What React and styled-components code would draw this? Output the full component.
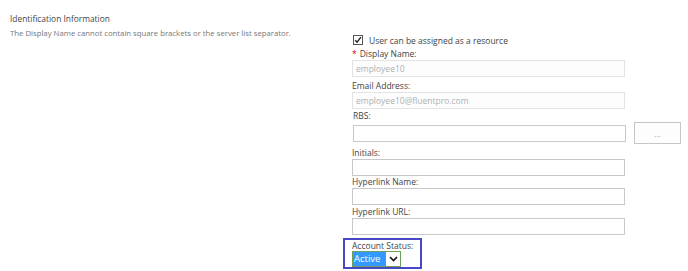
import React from "react";
import styled, { createGlobalStyle } from "styled-components";

const GlobalStyle = createGlobalStyle`
  html, body {
    margin: 0;
    padding: 0;
    background: #fff;
  }
  body {
    font-family: "Open Sans", "Noto Sans", sans-serif;
    color: #444;
  }
`;

const Page = styled.div`
  width: 688px;
  height: 271px;
  overflow: hidden;
  display: grid;
  grid-template-columns: 352px 1fr;
  grid-template-rows: auto 1fr;
`;

const Title = styled.h2`
  grid-column: 1 / -1;
  margin: 0;
  padding: 12px 0 0 10px;
  font-size: 8.4px;
  line-height: 13px;
  font-weight: 400;
  color: #444;
`;

const Description = styled.p`
  margin: 0;
  padding: 3px 0 0 10px;
  font-size: 7.75px;
  line-height: 11px;
  color: #777;
`;

const Form = styled.div`
  display: flex;
  flex-direction: column;
  align-items: flex-start;
  padding-top: 9px;
`;

const CheckRow = styled.label`
  display: flex;
  align-items: center;
  gap: 6px;
  height: 12px;
  padding-left: 1px;
  font-size: 8.5px;
  color: #444;
`;

const Box = styled.span`
  width: 8px;
  height: 8px;
  border: 1px solid #555;
  background: #fff;
  display: flex;
  align-items: center;
  justify-content: center;
`;

const Label = styled.div`
  margin-top: ${(p) => p.$gap ?? 2}px;
  font-size: 8.5px;
  line-height: 12px;
  color: #444;
  padding-left: ${(p) => p.$indent || 0}px;
`;

const Required = styled.span`
  color: #c00;
  margin-right: 3px;
`;

const Input = styled.div`
  box-sizing: border-box;
  width: ${(p) => p.$width || 273}px;
  height: 17px;
  border: 1px solid ${(p) => (p.$disabled ? "#e3e3e3" : "#c8c8c8")};
  background: ${(p) => (p.$disabled ? "#fdfdfd" : "#fff")};
  color: #b0b0b0;
  font-size: 8.5px;
  line-height: 15px;
  padding-left: 3px;
`;

const PickerRow = styled.div`
  display: flex;
  align-items: center;
  gap: 8px;
  height: 22px;
  padding-left: 1px;
`;

const PickerButton = styled.div`
  box-sizing: border-box;
  width: 47px;
  height: 22px;
  border: 1px solid #c6c6c6;
  background: #fdfdfd;
  color: #999;
  font-size: 8px;
  display: flex;
  align-items: center;
  justify-content: center;
`;

const StatusBox = styled.div`
  box-sizing: border-box;
  margin: 3px 0 0 -9px;
  width: 79px;
  height: 31px;
  border: 2px solid #4848c4;
  padding: 0 0 0 7px;
`;

const StatusLabel = styled.div`
  font-size: 8.5px;
  line-height: 10px;
  color: #444;
  padding-top: 1px;
`;

const Select = styled.div`
  box-sizing: border-box;
  display: flex;
  width: 49px;
  height: 16px;
  border: 1px solid #6fa05e;
`;

const SelectValue = styled.div`
  flex: 1;
  background: #3399ff;
  color: #fff;
  font-size: 9.5px;
  line-height: 14px;
  padding-left: 1px;
  border-right: 1px solid #6fa05e;
`;

const SelectArrow = styled.div`
  width: 14px;
  background: #fff;
  display: flex;
  align-items: center;
  justify-content: center;
`;

const Check = () => (
  <svg width="8" height="8" viewBox="0 0 8 8">
    <path d="M1.2 4.2 L3.1 6.2 L6.9 1.2" fill="none" stroke="#222" strokeWidth="1.4" />
  </svg>
);

const Chevron = () => (
  <svg width="9" height="6" viewBox="0 0 9 6">
    <path d="M1 1 L4.5 4.5 L8 1" fill="none" stroke="#111" strokeWidth="1.6" />
  </svg>
);

export default function App() {
  return (
    <>
      <GlobalStyle />
      <Page>
        <Title>Identification Information</Title>
        <Description>
          The Display Name cannot contain square brackets or the server list separator.
        </Description>
        <Form>
          <CheckRow>
            <Box>
              <Check />
            </Box>
            User can be assigned as a resource
          </CheckRow>
          <Label $gap={2}>
            <Required>*</Required>Display Name:
          </Label>
          <Input $disabled>employee10</Input>
          <Label $gap={3}>Email Address:</Label>
          <Input $disabled>employee10@fluentpro.com</Input>
          <Label $gap={1} $indent={1}>RBS:</Label>
          <PickerRow>
            <Input />
            <PickerButton>...</PickerButton>
          </PickerRow>
          <Label $gap={3}>Initials:</Label>
          <Input />
          <Label $gap={0}>Hyperlink Name:</Label>
          <Input />
          <Label $gap={1}>Hyperlink URL:</Label>
          <Input />
          <StatusBox>
            <StatusLabel>Account Status:</StatusLabel>
            <Select>
              <SelectValue>Active</SelectValue>
              <SelectArrow>
                <Chevron />
              </SelectArrow>
            </Select>
          </StatusBox>
        </Form>
      </Page>
    </>
  );
}
